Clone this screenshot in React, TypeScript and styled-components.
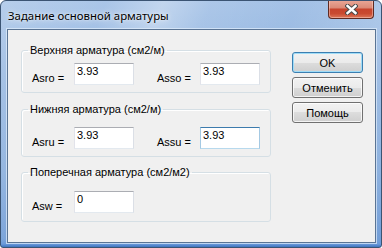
import React from 'react';
import styled, { createGlobalStyle } from 'styled-components';

const GlobalStyle = createGlobalStyle`
  html, body {
    margin: 0;
    padding: 0;
    background: #ffffff;
  }
  body {
    font-family: "Liberation Sans", Arial, sans-serif;
    font-size: 11px;
    color: #000;
  }
`;

type Field = {
  label: string;
  value: string;
  focused?: boolean;
};

type Group = {
  title: string;
  top: number;
  bottom: number;
  gap: number;
  fields: Field[];
};

const groups: Group[] = [
  {
    title: 'Верхняя арматура (см2/м)',
    top: 6,
    bottom: 7,
    gap: 0,
    fields: [
      { label: 'Asro =', value: '3.93' },
      { label: 'Asso =', value: '3.93' },
    ],
  },
  {
    title: 'Нижняя арматура (см2/м)',
    top: 11,
    bottom: 7,
    gap: 10,
    fields: [
      { label: 'Asru =', value: '3.93' },
      { label: 'Assu =', value: '3.93', focused: true },
    ],
  },
  {
    title: 'Поперечная арматура (см2/м2)',
    top: 12,
    bottom: 8,
    gap: 9,
    fields: [{ label: 'Asw =', value: '0' }],
  },
];

const CloseIcon = () => (
  <svg width="13" height="11" viewBox="0 0 13 11">
    <path d="M2.5 2 L10.5 9 M10.5 2 L2.5 9" stroke="#4a4a4a" strokeWidth="4.4" strokeLinecap="square" />
    <path d="M2.5 2 L10.5 9 M10.5 2 L2.5 9" stroke="#ffffff" strokeWidth="2.4" strokeLinecap="square" />
  </svg>
);

export default function App() {
  return (
    <>
      <GlobalStyle />
      <Window>
        <TitleBar>
          <Title>Задание основной арматуры</Title>
          <CloseButton type="button">
            <CloseIcon />
          </CloseButton>
        </TitleBar>
        <Client>
          <Groups>
            {groups.map((g) => (
              <GroupBox key={g.title} $gap={g.gap}>
                <Legend>{g.title}</Legend>
                <GroupBody $top={g.top} $bottom={g.bottom}>
                  {g.fields.map((f, i) => (
                    <React.Fragment key={f.label}>
                      <Label $second={i > 0}>{f.label}</Label>
                      <Input defaultValue={f.value} $focused={f.focused} />
                    </React.Fragment>
                  ))}
                </GroupBody>
              </GroupBox>
            ))}
          </Groups>
          <Buttons>
            <Button type="button" $default>
              OK
            </Button>
            <Button type="button">Отменить</Button>
            <Button type="button">Помощь</Button>
          </Buttons>
        </Client>
      </Window>
    </>
  );
}

const Window = styled.div`
  width: 382px;
  height: 248px;
  box-sizing: border-box;
  border: 1px solid #3b5473;
  border-radius: 6px 6px 3px 3px;
  overflow: hidden;
  display: flex;
  flex-direction: column;
  background:
    linear-gradient(to top, #3f74bf 0px, #6a9ada 3px, rgba(120, 160, 220, 0) 8px),
    linear-gradient(
      112deg,
      rgba(255, 255, 255, 0.22) 0%,
      rgba(255, 255, 255, 0.08) 22%,
      rgba(255, 255, 255, 0.34) 34%,
      rgba(255, 255, 255, 0.1) 44%,
      rgba(255, 255, 255, 0) 62%,
      rgba(255, 255, 255, 0.15) 82%,
      rgba(255, 255, 255, 0) 100%
    ),
    linear-gradient(to bottom, #a3c1e6 0%, #93b5e0 30%, #86acdc 70%, #6f9bd6 100%);
`;

const TitleBar = styled.div`
  height: 28px;
  flex: none;
  display: flex;
  justify-content: space-between;
  align-items: flex-start;
  padding: 0 7px 0 7px;
`;

const Title = styled.div`
  font-family: "Noto Sans", "Open Sans", sans-serif;
  font-size: 11.4px;
  line-height: 16px;
  padding-top: 7px;
  color: #000;
  text-shadow: 0 0 6px rgba(255, 255, 255, 0.9), 0 0 2px rgba(255, 255, 255, 0.7);
`;

const CloseButton = styled.button`
  width: 46px;
  height: 19px;
  margin-top: -1px;
  padding: 0;
  box-sizing: border-box;
  display: flex;
  align-items: center;
  justify-content: center;
  border: 1px solid #5e2a22;
  border-top: none;
  border-radius: 0 0 4px 4px;
  background: linear-gradient(
    to bottom,
    #eaa898 0%,
    #db8b78 42%,
    #c7442d 52%,
    #c94a30 75%,
    #dc7658 100%
  );
  box-shadow: inset 0 0 0 1px rgba(255, 220, 210, 0.45);
`;

const Client = styled.div`
  flex: 1;
  margin: 0 5px 4px 6px;
  border: 1px solid #5a7494;
  box-shadow: 0 0 0 1px rgba(225, 238, 252, 0.7);
  background: #f0f0f0;
  display: flex;
  align-items: flex-start;
  padding: 14px 0 0 13px;
`;

const Groups = styled.div`
  width: 250px;
  display: flex;
  flex-direction: column;
`;

const GroupBox = styled.fieldset<{ $gap: number }>`
  margin: ${(p) => p.$gap}px 0 0 0;
  padding: 0;
  min-inline-size: 0;
  border: 1px solid #d5dfe5;
  border-radius: 3px;
  box-shadow: inset 1px 1px 0 #ffffff;
`;

const Legend = styled.legend`
  margin-left: 6px;
  padding: 0 2px;
  font-size: 11px;
  line-height: 13px;
  color: #000;
`;

const GroupBody = styled.div<{ $top: number; $bottom: number }>`
  display: flex;
  align-items: flex-end;
  padding: ${(p) => p.$top}px 0 ${(p) => p.$bottom}px 10px;
`;

const Label = styled.span<{ $second?: boolean }>`
  width: ${(p) => (p.$second ? 43 : 42)}px;
  margin-left: ${(p) => (p.$second ? 23 : 0)}px;
  line-height: 13px;
  white-space: nowrap;
`;

const Input = styled.input<{ $focused?: boolean }>`
  width: 60px;
  height: 22px;
  box-sizing: border-box;
  margin: 0;
  padding: 0 2px 7px 2px;
  font-family: "Liberation Sans", Arial, sans-serif;
  font-size: 11px;
  line-height: 13px;
  color: #000;
  background: #fff;
  outline: none;
  border: 1px solid;
  border-color: ${(p) =>
    p.$focused ? '#3d7bad #a4c9e3 #b7d9ed #a4c9e3' : '#abadb3 #dbdfe6 #e3e9ef #e2e3ea'};
`;

const Buttons = styled.div`
  margin: 8px 0 0 21px;
  display: flex;
  flex-direction: column;
  gap: 4px;
`;

const Button = styled.button<{ $default?: boolean }>`
  width: 71px;
  height: 21px;
  margin: 0;
  padding: 0;
  box-sizing: border-box;
  font-family: "Liberation Sans", Arial, sans-serif;
  font-size: 11px;
  color: #000;
  border: 1px solid ${(p) => (p.$default ? '#3c7fb1' : '#707070')};
  border-radius: 3px;
  background: linear-gradient(to bottom, #f2f2f2 0%, #ebebeb 50%, #dddddd 50%, #cfcfcf 100%);
  box-shadow: inset 0 0 0 1px ${(p) => (p.$default ? '#9fdcf7' : 'rgba(255, 255, 255, 0.75)')};
`;
